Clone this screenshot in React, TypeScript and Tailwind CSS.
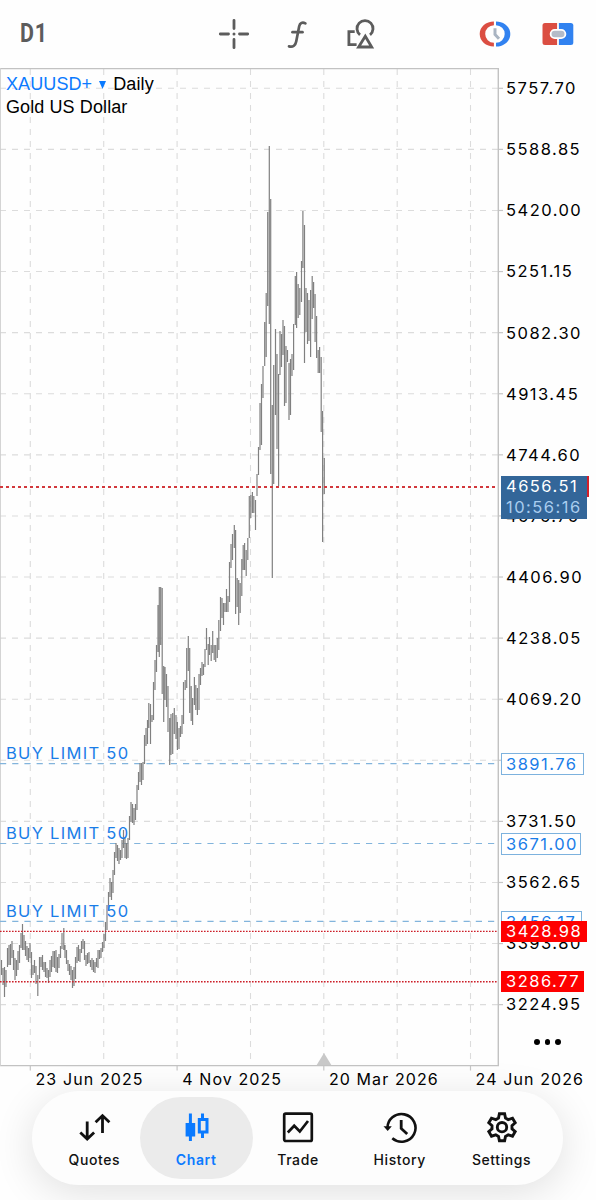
import React from "react";
import clsx from "clsx";

type Bar = [x: number, high: number, low: number];

// Daily high/low bars: x, top and bottom
const BARS: Bar[] = [
  [1.5, 960, 975], [3, 968, 985], [4.5, 967, 997], [6, 970, 987], [7.5, 948, 967], [9, 945, 965],
  [10.5, 944, 965], [12, 941, 958], [13.5, 950, 970], [15, 958, 980], [16.5, 960, 976], [18, 951, 970],
  [19.5, 945, 963], [21, 933, 948], [22.5, 924, 950], [24, 935, 950], [25.5, 941, 956], [27, 946, 960],
  [28.5, 948, 962], [30, 943, 958], [31.5, 952, 978], [33, 965, 975], [34.5, 960, 973], [36, 966, 984],
  [37.8, 975, 996], [39.5, 957, 979], [41, 957, 967], [42.5, 955, 970], [44, 962, 972], [45.5, 962, 977],
  [47, 968, 978], [48.5, 970, 983], [50, 960, 977], [51.5, 956, 972], [53, 951, 967], [54.5, 951, 968],
  [56, 950, 972], [57.5, 957, 973], [59, 954, 968], [60.5, 946, 958], [62, 933, 949], [63.8, 928, 950],
  [65, 945, 958], [66.5, 950, 964], [68, 960, 971], [69.5, 964, 975], [71, 966, 980], [72.5, 970, 988],
  [74, 967, 986], [75.5, 957, 979], [77, 947, 963], [78.5, 945, 961], [80, 949, 962], [81.5, 941, 953],
  [83, 939, 949], [84.5, 941, 960], [86, 955, 966], [87.5, 953, 964], [89, 952, 963], [90.5, 960, 967],
  [92, 958, 970], [93.5, 960, 972], [95, 962, 973], [96.5, 958, 967], [98, 950, 968], [99.5, 950, 959],
  [101, 948, 958], [102.5, 942, 952], [104, 934, 948], [105.5, 922, 941], [107, 905, 930], [108.5, 892, 911],
  [110, 878, 897], [111.5, 882, 900], [113, 870, 893], [114.5, 852, 875], [116, 843, 858], [117.5, 845, 861],
  [119, 848, 864], [120.5, 850, 860], [122, 840, 858], [123.5, 830, 848], [125, 838, 858], [126.5, 843, 859],
  [128, 838, 858], [129.5, 816, 840], [131, 802, 822], [132.5, 804, 823], [134, 808, 825], [135.5, 804, 820],
  [137, 785, 810], [138.5, 772, 790], [140, 763, 782], [141.5, 763, 785], [143, 762, 780], [144.5, 735, 764],
  [146, 728, 746], [147.5, 720, 744], [148.8, 703, 728], [150.5, 704, 744], [152, 715, 722], [153.5, 682, 720],
  [155, 660, 690], [156.5, 645, 672], [158, 605, 652], [159.3, 587, 657], [160.7, 587, 645], [162.2, 588, 694],
  [163.7, 666, 722], [165, 667, 700], [166.5, 674, 707], [168, 686, 732], [169.7, 718, 765], [171, 714, 755],
  [172.7, 713, 754], [174.3, 708, 734], [176, 715, 739], [177.4, 722, 750], [179, 728, 749], [180.5, 726, 737],
  [182, 715, 734], [183.5, 682, 724], [185.2, 680, 690], [186.7, 648, 688], [188.3, 636, 671], [189.7, 648, 713],
  [191.2, 686, 721], [192.6, 698, 725], [194.4, 677, 705], [195.8, 685, 710], [197.4, 688, 715], [199, 674, 710],
  [200.5, 668, 685], [202, 662, 676], [203.5, 664, 675], [205, 649, 667], [206.5, 628, 650], [208.2, 644, 665],
  [209.5, 637, 655], [211.2, 645, 661], [212.7, 631, 653], [214.2, 645, 660], [215.7, 645, 662], [217.3, 638, 658],
  [218.8, 620, 650], [220.5, 597, 631], [222, 598, 618], [223.5, 603, 625], [225, 603, 612], [226.5, 589, 612],
  [228, 596, 612], [229.5, 562, 602], [231, 544, 568], [232.5, 534, 560], [234.3, 525, 548], [235.6, 530, 614],
  [237.2, 578, 607], [238.7, 580, 625], [240.2, 583, 613], [241.8, 559, 596], [243.2, 545, 570], [244.6, 543, 570],
  [246.2, 550, 576], [247.8, 538, 560], [249.3, 496, 538], [250.8, 495, 518], [252.4, 492, 513], [253.8, 496, 513],
  [255.5, 500, 530], [257, 474, 496], [258.5, 447, 475], [260, 403, 450], [261.5, 384, 445], [263, 366, 398],
  [264.7, 322, 366], [266.2, 293, 357], [267.7, 212, 306], [269.3, 146, 324], [270.7, 199, 474], [272.3, 405, 578],
  [273.7, 365, 484], [275.5, 329, 415], [277, 354, 449], [278.6, 374, 486], [280, 331, 375], [281.5, 334, 367],
  [283, 320, 355], [284.5, 326, 406], [286, 346, 403], [287.5, 350, 362], [289, 363, 420], [290.5, 359, 415],
  [292, 354, 376], [293.6, 324, 370], [295.3, 276, 325], [296.6, 272, 328], [298.2, 284, 318], [299.8, 288, 315],
  [301.5, 261, 302], [302.9, 211, 268], [304.5, 225, 363], [306, 288, 332], [307.5, 293, 344], [309, 300, 341],
  [310.6, 290, 357], [312.2, 276, 319], [313.6, 282, 308], [315.1, 294, 342], [316.6, 316, 358], [318.2, 350, 373],
  [319.6, 347, 373], [321.2, 357, 432], [322.6, 411, 542], [324.3, 458, 494],
];

const GRID_X = [30.3, 103.7, 177.1, 250.5, 323.8, 397.2, 470.5];

const PRICES = [
  "5757.70", "5588.85", "5420.00", "5251.15", "5082.30", "4913.45", "4744.60", "4575.75",
  "4406.90", "4238.05", "4069.20", "3900.35", "3731.50", "3562.65", "3393.80", "3224.95",
];

const DATES = ["23 Jun 2025", "4 Nov 2025", "20 Mar 2026", "24 Jun 2026"];

const ORDERS = [
  { line: 763.7, labelTop: "top-[674px]" },
  { line: 843.5, labelTop: "top-[754px]" },
  { line: 921.4, labelTop: "top-[832px]" },
];

const Plot: React.FC = () => (
  <svg className="block" width="504" height="1004" viewBox="0 68 504 1004" fill="none">
    <g stroke="#dcdcdc" strokeWidth="1.1">
      {PRICES.map((p, i) => (
        <path key={p} d={`M0 ${88.3 + i * 61.09}H498`} strokeDasharray="6 6" />
      ))}
      {GRID_X.map((x) => (
        <path key={x} d={`M${x} 69V1065`} strokeDasharray="6 6" />
      ))}
    </g>
    <g stroke="#c6c6c6" strokeWidth="1.2">
      {PRICES.map((p, i) => (
        <path key={p} d={`M498 ${88.3 + i * 61.09}h5`} />
      ))}
      {[0, 2, 4, 6].map((i) => (
        <path key={i} d={`M${GRID_X[i]} 1065v5.5`} />
      ))}
    </g>
    <path d="M0 68.6H498.3V1065.6H0" stroke="#c2c2c2" strokeWidth="1.4" />
    <path d="M.4 68V1066" stroke="#cfcfcf" strokeWidth="1" />
    <path d="M324 1053L331.3 1065H316.7Z" fill="#c8c8c8" />
    {ORDERS.map((o) => (
      <path key={o.line} d={`M0 ${o.line}H497`} stroke="#82b4dc" strokeWidth="1.2" strokeDasharray="6.2 6" />
    ))}
    <path d={BARS.map(([x, high, low]) => `M${x} ${high}V${low}`).join("")} stroke="#808080" strokeWidth="1.2" />
    <path d="M0 931.4H498M0 981.8H498" stroke="#cc1f28" strokeWidth="1.4" strokeDasharray="1.6 1.4" />
    <path d="M0 487H498" stroke="#d2383c" strokeWidth="1.9" strokeDasharray="3 3" />
  </svg>
);

const CrosshairIcon = () => (
  <svg width="32" height="32" viewBox="0 0 32 32" fill="none" stroke="#5c5c5c" strokeWidth="2.8" strokeLinecap="round">
    <path d="M16 2.3V10.5M16 21.5V29.7M2.3 16H10.5M21.5 16H29.7" />
    <circle cx="16" cy="16" r="1.5" fill="#5c5c5c" stroke="none" />
  </svg>
);

const FunctionIcon = () => (
  <svg width="24" height="32" viewBox="0 0 24 32" fill="none" stroke="#5c5c5c" strokeWidth="2.7" strokeLinecap="round">
    <path d="M20.4 5.4C17.4 3.9 14.9 4.9 14.2 8.3L11.2 23.5C10.5 27.2 8.2 29.5 4 28.4" />
    <path d="M7.5 14.2H17.5" />
  </svg>
);

const ShapesIcon = () => (
  <svg width="30" height="32" viewBox="0 0 30 32" fill="none" stroke="#5c5c5c" strokeWidth="2.8">
    <path d="M14 17.8A8 8 0 1 1 24 17.8" />
    <path d="M8.7 14.6H2.9V27.6H10.6" />
    <path d="M19.3 19.3L25.7 30H12.6Z" />
  </svg>
);

const ClockIcon = () => (
  <svg width="32" height="26" viewBox="0 0 32 26" fill="none">
    <path d="M14.9 .5C7 .5.7 5.8.7 13s6.3 12.5 14.2 12.5V21.7A8.7 8.7 0 0 1 14.9 4.3Z" fill="#db4e42" />
    <path d="M17 .5C24.9.5 31.3 5.8 31.3 13S24.9 25.5 17 25.5V21.7A8.7 8.7 0 0 0 17 4.3Z" fill="#3182f0" />
    <path d="M16 7.3V13.5L20 17.8" stroke="#a9b4c2" strokeWidth="3" />
  </svg>
);

const TradeToggleIcon = () => (
  <svg width="32" height="22" viewBox="0 0 32 22" fill="none">
    <path d="M15.1 0H3A2.5 2.5 0 0 0 .5 2.5v17A2.5 2.5 0 0 0 3 22H15.1Z" fill="#db4e42" />
    <path d="M16.9 0H28.8A2.5 2.5 0 0 1 31.3 2.5v17A2.5 2.5 0 0 1 28.8 22H16.9Z" fill="#3182f0" />
    <rect x="8.6" y="6.8" width="14.8" height="8.4" rx="4.2" fill="#b4bbc8" stroke="#fff" strokeWidth="1.8" />
  </svg>
);

const QuotesIcon = () => (
  <svg width="34" height="34" viewBox="0 0 34 34" fill="none" stroke="currentColor" strokeWidth="2.8">
    <path d="M10.2 11.5V29M3.3 22.5L10.2 29L17.1 22.5" />
    <path d="M25.5 23V5.8M18.6 12.3L25.5 5.6L32.4 12.3" />
  </svg>
);

const CandlesIcon = () => (
  <svg width="34" height="34" viewBox="0 0 34 34" fill="currentColor">
    <path d="M9.9 3.5h3V13h3.3v13.5H12.9V31H9.9V26.5H6.600V13H9.9Z" />
    <path fillRule="evenodd" d="M22 3.5h3V8h4.500V23.500H25V28H22V23.500H18.800V8H22ZM21.800 11V20.500H26.500V11Z" />
  </svg>
);

const TradeIcon = () => (
  <svg width="34" height="34" viewBox="0 0 34 34" fill="none" stroke="currentColor" strokeWidth="2.7">
    <rect x="3.2" y="3.7" width="27.6" height="27.3" rx="1.5" />
    <path d="M6.8 22.5L13.2 15.7L18.8 21.5L27 11" />
  </svg>
);

const HistoryIcon = () => (
  <svg width="34" height="34" viewBox="0 0 34 34" fill="none" stroke="currentColor" strokeWidth="2.6">
    <path d="M4.5 18.500A14 13.800 0 1 1 9.300 28.300" />
    <path d="M.5 16.300H8.800L4.700 20.900Z" fill="currentColor" stroke="none" />
    <path d="M18.2 10V18.400L24.200 24" strokeWidth="2.8" />
  </svg>
);

const SettingsIcon = () => (
  <svg width="34" height="34" viewBox="0 0 34 34" fill="none" stroke="currentColor" strokeWidth="2.9">
    <path d="M14.4 3.7H19.6L20.5 8L23.2 9.6L27.5 8.2L30.2 12.8L27 15.6V18.8L30.2 21.6L27.5 26.2L23.2 24.8L20.5 26.4L19.6 30.7H14.4L13.5 26.4L10.8 24.8L6.5 26.2L3.8 21.6L7 18.8V15.6L3.8 12.8L6.5 8.2L10.8 9.6L13.5 8Z" />
    <circle cx="17" cy="17.2" r="4.7" />
  </svg>
);

const TABS = [
  { name: "Quotes", icon: <QuotesIcon /> },
  { name: "Chart", icon: <CandlesIcon />, active: true },
  { name: "Trade", icon: <TradeIcon /> },
  { name: "History", icon: <HistoryIcon /> },
  { name: "Settings", icon: <SettingsIcon /> },
];

const App: React.FC = () => {
  return (
    <div className="w-[596px] h-[1200px] overflow-hidden bg-[#fefefe] font-['Inter',sans-serif] text-black flex flex-col">
      <header className="h-[68px] shrink-0 flex items-center pl-[19px] pr-[22px]">
        <div className="w-[199px] pl-px">
          <span className="inline-block origin-left scale-x-[0.84] font-['Roboto',sans-serif] font-bold text-[25.5px] leading-none tracking-[1px] text-[#5c5c5c]">
            D1
          </span>
        </div>
        <CrosshairIcon />
        <div className="ml-[35px]"><FunctionIcon /></div>
        <div className="ml-[37px] -mt-[2px]"><ShapesIcon /></div>
        <div className="flex-1" />
        <ClockIcon />
        <div className="ml-[31px]"><TradeToggleIcon /></div>
      </header>

      <main className="h-[998px] shrink-0 flex">
        <div className="relative w-[499px] shrink-0">
          <Plot />
          <div className="absolute left-[6px] top-[5px] font-['Liberation_Sans',sans-serif] text-[18px] leading-[22.5px] tracking-[0.1px]">
            <div className="flex items-center">
              <span className="text-[#0a7aff]">XAUUSD+</span>
              <svg className="ml-[7px] mr-[7px] mt-0.5" width="7" height="8" viewBox="0 0 7 8"><path d="M0 0H7L3.5 8Z" fill="#0a7aff" /></svg>
              <span>Daily</span>
            </div>
            <div>Gold US Dollar</div>
          </div>
          {ORDERS.map((o) => (
            <div key={o.line} className={clsx("absolute left-[6px] text-[16.5px] leading-[22px] tracking-[1.3px] text-[#1a7de8]", o.labelTop)}>
              BUY LIMIT 50
            </div>
          ))}
        </div>

        {/* price scale */}
        <div className="relative flex-1 pt-[9.2px] pl-[7px] text-[16.5px] leading-[22px] tracking-[1.48px]">
          {PRICES.map((p, i) => (
            <div key={p} className={clsx("h-[61.09px]", i === 11 && "invisible")}>{p}</div>
          ))}
          <div className="absolute left-[3px] top-[408px] w-[87px] h-[21px] bg-[#d4202a]" />
          <div className="absolute left-[2px] top-[408px] w-[86px] h-[43px] bg-[#336699] pl-[5px] text-white leading-[21px]">
            <div>4656.51</div>
            <div className="text-[#a9cdef] leading-[20px]">10:56:16</div>
          </div>
          <div className="absolute left-[2px] top-[685px] w-[83px] h-[22px] border border-[#7db2de] bg-white pl-[4px] leading-[20px] text-[#1a7de8]">3891.76</div>
          <div className="absolute left-[2px] top-[765px] w-[80px] h-[22px] border border-[#7db2de] bg-white pl-[4px] leading-[20px] text-[#1a7de8]">3671.00</div>
          <div className="absolute left-[2px] top-[843px] w-[81px] h-[21px] border border-[#7db2de] bg-white pl-[4px] leading-[20px] text-[#1a7de8]">3456.17</div>
          <div className="absolute left-[2px] top-[853px] w-[86px] h-[21px] bg-[#fe0000] pl-[5px] leading-[21px] text-white">3428.98</div>
          <div className="absolute left-[2px] top-[903px] w-[83px] h-[21px] bg-[#fe0000] pl-[5px] leading-[21px] text-white">3286.77</div>
          <div className="absolute left-[35px] top-[971px] flex gap-[5px]">
            <i className="size-[5.5px] rounded-full bg-black" />
            <i className="size-[5.5px] rounded-full bg-black" />
            <i className="size-[5.5px] rounded-full bg-black" />
          </div>
        </div>
      </main>

      {/* time scale */}
      <div className="relative z-10 h-[25px] shrink-0 flex pl-[35.5px] text-[16px] leading-[26px] tracking-[1.1px] whitespace-nowrap">
        {DATES.map((d) => (
          <div key={d} className="w-[146.7px] shrink-0">{d}</div>
        ))}
      </div>

      <nav className="ml-[32px] w-[531px] h-[94px] shrink-0 rounded-full bg-[#fdfdfd] shadow-[0_8px_40px_rgba(0,0,0,0.12)] pl-[11.5px] pr-[10.5px] flex">
        {TABS.map((t) => (
          <div
            key={t.name}
            className={clsx(
              "relative flex-1 flex flex-col items-center pt-[19px] text-[14px] leading-[20px] tracking-[0.6px]",
              t.active ? "text-[#0a7aff] font-semibold" : "text-[#111] font-medium"
            )}
          >
            {t.active && <div className="absolute -inset-x-[5.5px] top-[6px] h-[82px] rounded-[41px] bg-[#ebebeb]" />}
            <div className="relative">{t.icon}</div>
            <div className="relative mt-[5.5px]">{t.name}</div>
          </div>
        ))}
      </nav>
    </div>
  );
};

export default App;
